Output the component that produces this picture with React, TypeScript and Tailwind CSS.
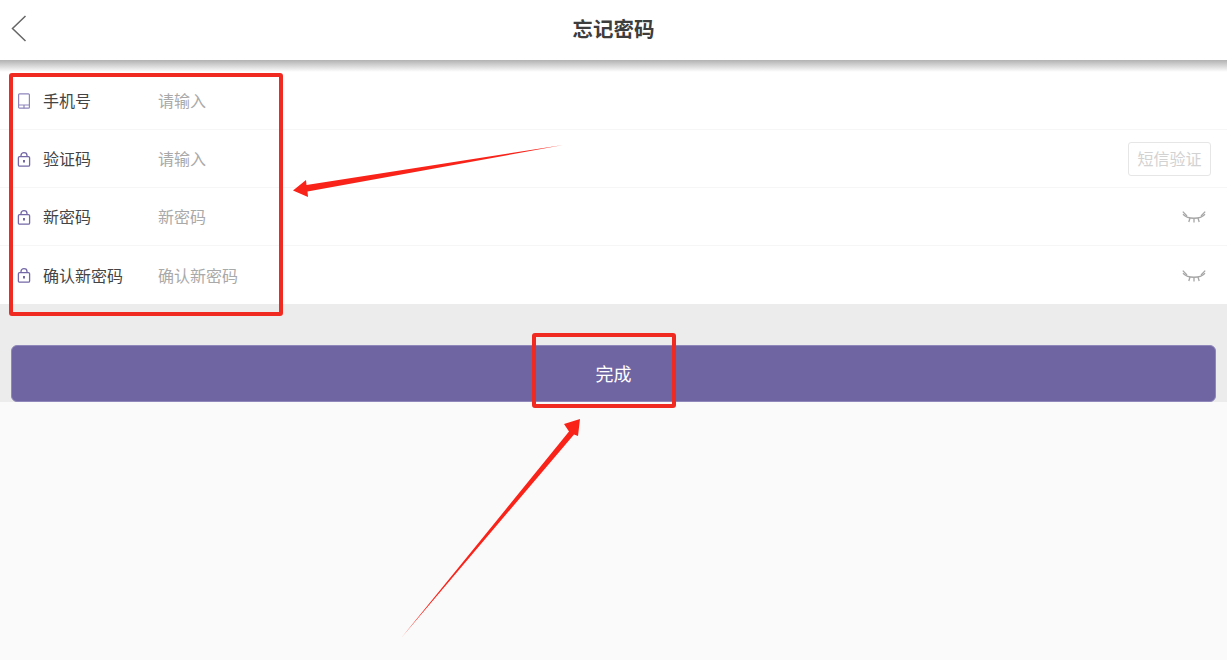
const FONT = "font-['Liberation_Sans','Noto_Sans_CJK_SC',sans-serif]";

function PhoneIcon() {
  return (
    <svg width="14" height="16" viewBox="0 0 14 16" fill="none" stroke="#8f85bb" strokeWidth="1.2">
      <rect x="1.6" y="0.8" width="10.8" height="14.4" rx="1" />
      <path d="M1.6 12H12.4M7 12V15.2" />
    </svg>
  );
}

function LockIcon() {
  return (
    <svg className="mt-[1px]" width="14" height="15" viewBox="0 0 14 15" fill="none" stroke="#7468a6" strokeWidth="1.3">
      <rect x="1.4" y="4.6" width="11.2" height="9.6" rx="1.2" />
      <path d="M4 4.6V3.4C4 1.8 5.3 0.7 7 0.7S10 1.8 10 3.4V4.6" />
      <path d="M7 8V10.6" strokeWidth="2" />
    </svg>
  );
}

function ClosedEye() {
  return (
    <svg className="mt-[1px]" width="24" height="12" viewBox="0 0 24 12" fill="none" stroke="#a6a6a6" strokeWidth="1.3">
      <path d="M1 3.2C6 8.6 18 8.6 23 3.2" />
      <path d="M0.8 0.6L5 5M23.2 0.6L19 5M8 7L6.8 11M16 7L17.2 11M12 8V11.6" />
    </svg>
  );
}

function Row({
  icon,
  label,
  hint,
  last,
  children,
}: {
  icon: React.ReactNode;
  label: string;
  hint: string;
  last?: boolean;
  children?: React.ReactNode;
}) {
  return (
    <div className={`flex h-[58px] items-center pl-[17px] pr-[16px] ${last ? "" : "border-b border-[#f6f6f6]"}`}>
      <span className="flex w-[26px] shrink-0 items-center">{icon}</span>
      <span className="w-[115px] shrink-0 pt-[3px] text-base text-[#444444]">{label}</span>
      <span className="flex-1 pt-[3px] text-base text-[#a9a9a9]">{hint}</span>
      {children}
    </div>
  );
}

export default function App() {
  return (
    <div className={`relative flex h-[660px] w-[1227px] flex-col overflow-hidden bg-[#fafafa] ${FONT}`}>
      <header className="flex h-[60px] shrink-0 items-center justify-center bg-white">
        <h1 className="text-[20.5px] leading-none font-bold text-[#3d3d3d]">忘记密码</h1>
        <svg className="absolute top-[14px] left-[10px]" width="18" height="29" viewBox="0 0 18 29" fill="none" stroke="#666666" strokeWidth="1.5">
          <path d="M15.5 2L2.5 14.5L15.5 27" />
        </svg>
      </header>
      <div className="h-3 shrink-0 bg-gradient-to-b from-[#b2b2b2] to-white" />

      <section className="bg-white">
        <Row icon={<PhoneIcon />} label="手机号" hint="请输入" />
        <Row icon={<LockIcon />} label="验证码" hint="请输入">
          <button className="flex h-[34px] w-[83px] items-center justify-center rounded-[3px] border border-[#e6e6e6] pt-[3px] text-base text-[#d2d2d2]">
            短信验证
          </button>
        </Row>
        <Row icon={<LockIcon />} label="新密码" hint="新密码">
          <span className="mr-[5px]">
            <ClosedEye />
          </span>
        </Row>
        <Row icon={<LockIcon />} label="确认新密码" hint="确认新密码" last>
          <span className="mr-[5px]">
            <ClosedEye />
          </span>
        </Row>
      </section>

      <div className="bg-[#ececec] px-[11px] pt-[41px]">
        <button className="flex h-[57px] w-full items-center justify-center rounded-md border border-[#8f86b9] bg-[#7065a3] pt-[3px] text-lg text-white">
          完成
        </button>
      </div>

      {/* annotations drawn on top of the screenshot */}
      <div className="absolute top-[73px] left-[9px] h-[243px] w-[274px] rounded-[3px] border-4 border-[#f02a20]" />
      <div className="absolute top-[333px] left-[532px] h-[75px] w-[144px] rounded-[3px] border-4 border-[#f02a20]" />
      <svg className="absolute top-0 left-0" width="1227" height="660" viewBox="0 0 1227 660" fill="#f9231a">
        <path d="M563 145L306.5 185L306 180L293 190.5L308 197L307.5 191.5Z" />
        <path d="M402 637L569 431.5L564 424L580 419L578 436L574 434.5Z" />
      </svg>
    </div>
  );
}
